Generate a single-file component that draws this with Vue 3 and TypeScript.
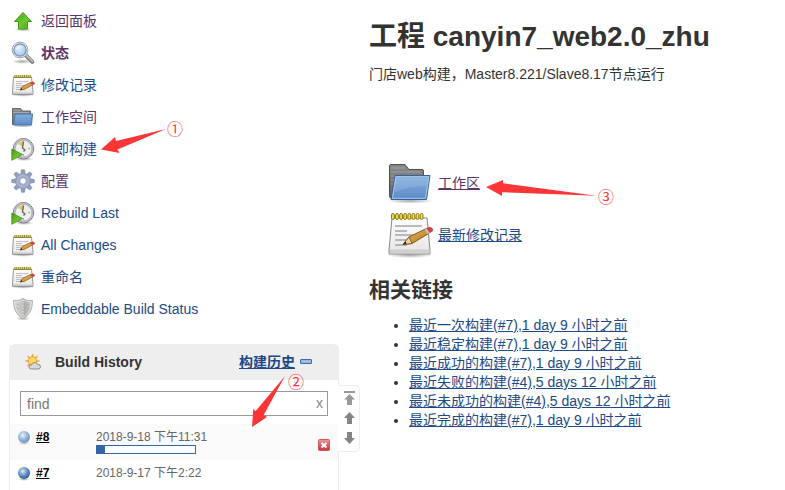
<script setup lang="ts">
interface Task {
  icon: string
  label: string
  visited?: boolean
  current?: boolean
}

interface RelatedBuild {
  name: string
  age: string
}

const tasks: Task[] = [
  { icon: 'up', label: '返回面板', visited: true },
  { icon: 'search', label: '状态', visited: true, current: true },
  { icon: 'notepad', label: '修改记录' },
  { icon: 'folder', label: '工作空间', visited: true },
  { icon: 'clock', label: '立即构建' },
  { icon: 'gear', label: '配置', visited: true },
  { icon: 'clock', label: 'Rebuild Last' },
  { icon: 'notepad', label: 'All Changes' },
  { icon: 'notepad', label: '重命名' },
  { icon: 'shield', label: 'Embeddable Build Status' },
]

const related: RelatedBuild[] = [
  { name: '最近一次构建(#7)', age: '1 day 9 小时之前' },
  { name: '最近稳定构建(#7)', age: '1 day 9 小时之前' },
  { name: '最近成功的构建(#7)', age: '1 day 9 小时之前' },
  { name: '最近失败的构建(#4)', age: '5 days 12 小时之前' },
  { name: '最近未成功的构建(#4)', age: '5 days 12 小时之前' },
  { name: '最近完成的构建(#7)', age: '1 day 9 小时之前' },
]

const progress = 8
const gearAngles = [0, 45, 90, 135, 180, 225, 270, 315]
const rings = [0, 1, 2, 3, 4, 5, 6, 7]
</script>

<template>
  <svg class="sprite" aria-hidden="true">
    <defs>
      <linearGradient id="gGreen" x1="0" y1="0" x2="1" y2="1">
        <stop offset="0" stop-color="#3f9a10" /><stop offset=".55" stop-color="#6cc72c" /><stop offset="1" stop-color="#3c9410" />
      </linearGradient>
      <linearGradient id="gBlue" x1="0" y1="0" x2="0" y2="1">
        <stop offset="0" stop-color="#86aede" /><stop offset="1" stop-color="#5b8cc8" />
      </linearGradient>
      <linearGradient id="gGray" x1="0" y1="0" x2="0" y2="1">
        <stop offset="0" stop-color="#8b8b8b" /><stop offset="1" stop-color="#626262" />
      </linearGradient>
      <linearGradient id="gPaper" x1="0" y1="0" x2="0" y2="1">
        <stop offset="0" stop-color="#ffffff" /><stop offset="1" stop-color="#e4e4e4" />
      </linearGradient>
      <linearGradient id="gPencil" x1="0" y1="0" x2="1" y2="1">
        <stop offset="0" stop-color="#f3c467" /><stop offset="1" stop-color="#a96f13" />
      </linearGradient>
      <linearGradient id="gShield" x1="0" y1="0" x2="1" y2="0">
        <stop offset="0" stop-color="#d4d6d3" /><stop offset=".5" stop-color="#c0c2be" /><stop offset=".55" stop-color="#a8aba7" /><stop offset="1" stop-color="#d0d2ce" />
      </linearGradient>
      <radialGradient id="gLens" cx=".4" cy=".35" r=".7">
        <stop offset="0" stop-color="#e4f0fb" /><stop offset="1" stop-color="#a3c4e8" />
      </radialGradient>
      <radialGradient id="gBall" cx=".4" cy=".35" r=".65">
        <stop offset="0" stop-color="#e6eee9" /><stop offset=".5" stop-color="#6f9bcd" /><stop offset="1" stop-color="#2c5c9c" />
      </radialGradient>
      <radialGradient id="gShadow">
        <stop offset="0" stop-color="#000" stop-opacity=".35" /><stop offset="1" stop-color="#000" stop-opacity="0" />
      </radialGradient>
      <linearGradient id="gRed" x1="0" y1="0" x2="0" y2="1">
        <stop offset="0" stop-color="#ee9a9a" /><stop offset="1" stop-color="#cc2f35" />
      </linearGradient>
    </defs>

    <symbol id="up" viewBox="0 0 24 24">
      <ellipse cx="12" cy="20.5" rx="9" ry="2" fill="url(#gShadow)" />
      <path d="M12 3.5 20.5 12.500H16.500V20H7.500V12.500H3.500Z" fill="url(#gGreen)" stroke="#3f9414" stroke-linejoin="round" />
      <path d="M12 5 18 11.500H15.500V19H8.500V11.500H6Z" fill="none" stroke="#8cdb57" stroke-width=".7" opacity=".5" />
    </symbol>

    <symbol id="search" viewBox="0 0 24 24">
      <ellipse cx="11" cy="20.500" rx="10" ry="2.500" fill="url(#gShadow)" />
      <path d="M15 14.500 21.300 20.800" stroke="#7c7c7c" stroke-width="4" stroke-linecap="round" />
      <path d="M15.500 14.500 21.500 20.300" stroke="#bcbcbc" stroke-width="1.800" stroke-linecap="round" />
      <circle cx="9" cy="9" r="7.900" fill="#f4f4f4" stroke="#a4a4a4" />
      <circle cx="9" cy="9" r="6.200" fill="url(#gLens)" stroke="#6f90bd" stroke-width="1.200" />
      <path d="M5 9C5.500 5.500 8.500 4.500 12 5.500 8.500 6 6.500 7 5 9Z" fill="#fff" opacity=".8" />
    </symbol>

    <symbol id="notepad" viewBox="0 0 48 48">
      <ellipse cx="24" cy="44" rx="23" ry="3" fill="url(#gShadow)" />
      <path d="M6 7H41L44 39V43H3V39Z" fill="url(#gPaper)" stroke="#888" stroke-linejoin="round" />
      <path d="M4 38.500H43.500V42.500H4Z" fill="#cfcfcf" />
      <path d="M9 15H36M9 20H21M9 24H34M9 29H27M9 34H21" stroke="#a5a5a5" stroke-width="1.400" />
      <g v-for="n in rings" :key="n">
        <rect :x="5.500 + n * 4.100" y="2.500" width="2.800" height="6" rx="1.400" fill="#f0dc5b" stroke="#8f7c10" />
      </g>
      <path d="M17 33.500 23 26 40.500 17.500 43.500 22 26 32.500Z" fill="url(#gPencil)" stroke="#845512" stroke-linejoin="round" />
      <path d="M17 33.500 23 26 26 32.500Z" fill="#ead3a5" stroke="#73511c" stroke-width=".8" />
      <path d="M17 33.500 19.500 30.500 20.500 32.700Z" fill="#222" />
      <path d="M38.500 18.500 41 17.300 44 21.500 41.500 23.200Z" fill="#b8bdc2" />
      <path d="M41 17.300 43.500 16.200Q47.500 17 46.500 20L44 21.500Z" fill="#de3c3c" stroke="#a42b2b" stroke-width=".6" />
    </symbol>

    <symbol id="notepadSmall" viewBox="0 0 24 24">
      <ellipse cx="12" cy="22" rx="11.500" ry="1.800" fill="url(#gShadow)" />
      <path d="M2.500 4H20.500L22 19V21.500H1.500V19Z" fill="url(#gPaper)" stroke="#969696" stroke-linejoin="round" />
      <path d="M2 19.500H21.500V21H2Z" fill="#c9c9c9" />
      <path d="M5 8.500H17M5 10.500H11M5 12.500H15M5 14.500H11M5 16.500H9" stroke="#b4b4b4" stroke-width=".8" />
      <path d="M3 3.500H20" stroke="#91822f" stroke-width="3" />
      <path d="M3.500 3H20" stroke="#ebd866" stroke-width="2" stroke-dasharray="1.200 .9" />
      <path d="M9 17 11.500 13.500 20 9.500 21.500 12 13 16.500Z" fill="#dfa24a" stroke="#8c5d1c" stroke-width=".8" stroke-linejoin="round" />
      <path d="M9 17 10.500 14.800 11.500 16.500Z" fill="#33261a" />
      <path d="M19.500 9.800 22 8.800Q24 9.500 23.300 11L21.500 12Z" fill="#dc4630" stroke="#a83b25" stroke-width=".5" />
    </symbol>

    <symbol id="folder" viewBox="0 0 48 48">
      <ellipse cx="24" cy="42" rx="23" ry="2.500" fill="url(#gShadow)" />
      <path d="M3.500 7Q3.500 5.500 5 5.500H19L23 10.500H36Q37.500 10.500 37.500 12V39H5Q3.500 39 3.500 37Z" fill="url(#gGray)" stroke="#505050" />
      <path d="M5 9H19M5 13H35M5 17H9M5 21H8M5 25H7" stroke="#a5a5a5" stroke-width=".8" />
      <path d="M9 16.500H44L40.500 40.500H5Z" fill="url(#gBlue)" stroke="#36639f" stroke-linejoin="round" />
      <path d="M10 17.700H42.700L39.500 39.300H6.500Z" fill="none" stroke="#a9c7e9" />
      <path d="M9 19H42L40.500 27Q22 27 8.500 33Z" fill="#fff" opacity=".12" />
    </symbol>

    <symbol id="folderSmall" viewBox="0 0 24 24">
      <ellipse cx="12" cy="21" rx="11" ry="1.500" fill="url(#gShadow)" />
      <path d="M1.500 3.500H9.500L11.500 6H19.500V19.500H1.500Z" fill="#858585" stroke="#666" stroke-linejoin="round" />
      <path d="M2 5H9M2 7.500H18" stroke="#a9a9a9" />
      <path d="M4 9H21.500L20.500 20H2.500Z" fill="url(#gBlue)" stroke="#4673ad" stroke-linejoin="round" />
    </symbol>

    <symbol id="clock" viewBox="0 0 24 24">
      <ellipse cx="13" cy="22" rx="10" ry="2" fill="url(#gShadow)" />
      <circle cx="12.500" cy="11.700" r="10.200" fill="#eeeeea" stroke="#74747d" />
      <circle cx="12.500" cy="11.700" r="8.800" fill="none" stroke="#b4b5c6" stroke-width="1.900" />
      <path d="M12 10.500 7 6.500Q9 4 12.500 4Z" fill="#e1c75b" />
      <path d="M12.500 4.500 11.500 11 14 13 12.500 14.500" fill="none" stroke="#65645d" stroke-width="1.300" />
      <circle cx="18" cy="11.500" r=".7" fill="#777" /><circle cx="12.500" cy="18" r=".7" fill="#777" />
      <path d="M.8 12 11.500 17.500 .8 23.300Z" fill="url(#gGreen)" stroke="#468f20" stroke-width=".8" />
    </symbol>

    <symbol id="gear" viewBox="0 0 24 24">
      <g fill="#929fc0" stroke="#7886aa" stroke-width=".7">
        <path v-for="angle in gearAngles" :key="angle" d="M9.800 6 10.500 .8H13.500L14.200 6Z" :transform="`rotate(${angle} 12 12)`" />
      </g>
      <circle cx="12" cy="12" r="5.700" fill="none" stroke="#8e9abb" stroke-width="4.600" />
      <circle cx="12" cy="12" r="5.500" fill="none" stroke="#a9b4d0" stroke-width="2.500" />
      <circle cx="12" cy="12" r="3.300" fill="#fff" stroke="#7e8aad" stroke-width=".8" />
    </symbol>

    <symbol id="shield" viewBox="0 0 24 24">
      <ellipse cx="12" cy="21.500" rx="7" ry="2" fill="url(#gShadow)" />
      <path d="M12 1.500Q15 4 21.500 3.500 22 16 12 22 2 16 2.500 3.500 9 4 12 1.500Z" fill="url(#gShield)" stroke="#b2b4b1" />
      <path d="M12 3Q15 5 20.300 4.800 20.300 15 12 20.500 3.700 15 3.700 4.800 9 5 12 3Z" fill="none" stroke="#e6e7e4" stroke-width=".8" />
      <path d="M12 5V19" stroke="#eee" stroke-dasharray="1 2" />
      <path d="M7 7V15M17 7V15" stroke="#999c98" stroke-dasharray="1 3" />
    </symbol>

    <symbol id="weather" viewBox="0 0 16 16">
      <path d="M7.500 0V14M.5 7H14.500M2.500 2 12.500 12M12.500 2 2.500 12" stroke="#f0a53a" stroke-width="1.400" />
      <circle cx="7.500" cy="7" r="4.300" fill="#fbd763" stroke="#eda02d" />
      <path d="M6.500 15Q4 15 4 12.800 4.200 10.800 6.500 11 7 8.500 9.800 8.500 12 8.500 12.500 10.300 15.500 10.300 15.500 12.800 15.500 15 13 15Z" fill="#d9dad8" stroke="#888a87" />
    </symbol>

    <symbol id="ball" viewBox="0 0 16 16">
      <ellipse cx="8" cy="14.300" rx="6" ry="1.600" fill="url(#gShadow)" />
      <circle cx="8" cy="8" r="6" fill="url(#gBall)" />
    </symbol>

    <symbol id="stop" viewBox="0 0 12 12">
      <rect x=".5" y=".5" width="11" height="11" rx="1" fill="url(#gRed)" stroke="#c95a5f" />
      <path d="M3.500 4 8.500 8.500M8.500 4 3.500 8.500" stroke="#fff" stroke-width="2" />
    </symbol>

    <symbol id="pageTop" viewBox="0 0 12 14">
      <path d="M1 0H12V2H1ZM6.500 3 12 8.500H9V14H4V8.500H1Z" fill="#999" />
    </symbol>
    <symbol id="pageUp" viewBox="0 0 12 14">
      <path d="M6.500 1 12 7H9V13H4V7H1Z" fill="#858585" />
    </symbol>
    <symbol id="pageDown" viewBox="0 0 12 14">
      <path d="M6.500 13 12 7H9V1H4V7H1Z" fill="#858585" />
    </symbol>
  </svg>

  <div class="page">
    <aside class="side">
      <nav class="tasks">
        <a
          v-for="task in tasks"
          :key="task.label"
          href="#"
          class="task"
          :class="{ visited: task.visited, current: task.current }"
        >
          <svg class="icon24" aria-hidden="true">
            <use :href="task.icon === 'notepad' || task.icon === 'folder' ? `#${task.icon}Small` : `#${task.icon}`" />
          </svg>
          <span>{{ task.label }}</span>
        </a>
      </nav>

      <section class="history">
        <header class="history-head">
          <svg class="icon16" aria-hidden="true"><use href="#weather" /></svg>
          <span class="history-title">Build History</span>
          <a href="#" class="trend">构建历史</a>
          <button class="collapse" type="button" aria-label="collapse"></button>
        </header>
        <div class="search">
          <input class="find" type="text" placeholder="find" aria-label="find" />
          <button class="clear" type="button">x</button>
        </div>
        <div class="build running">
          <svg class="icon16" aria-hidden="true"><use href="#ball" /></svg>
          <a href="#" class="number">#8</a>
          <div class="details">
            <span>2018-9-18 下午11:31</span>
            <div class="progress"><div class="done" :style="{ width: progress + '%' }"></div></div>
          </div>
          <button class="stop" type="button" aria-label="stop">
            <svg class="icon12" aria-hidden="true"><use href="#stop" /></svg>
          </button>
        </div>
        <div class="build">
          <svg class="icon16" aria-hidden="true"><use href="#ball" /></svg>
          <a href="#" class="number">#7</a>
          <div class="details"><span>2018-9-17 下午2:22</span></div>
        </div>
        <div class="pager">
          <button type="button" aria-label="newest"><svg aria-hidden="true"><use href="#pageTop" /></svg></button>
          <button type="button" aria-label="newer"><svg aria-hidden="true"><use href="#pageUp" /></svg></button>
          <button type="button" aria-label="older"><svg aria-hidden="true"><use href="#pageDown" /></svg></button>
        </div>
      </section>
    </aside>

    <main class="main">
      <h1>工程 canyin7_web2.0_zhu</h1>
      <p class="description">门店web构建，Master8.221/Slave8.17节点运行</p>
      <div class="shortcuts">
        <div class="shortcut">
          <svg class="icon48" aria-hidden="true"><use href="#folder" /></svg>
          <a href="#" class="visited">工作区</a>
        </div>
        <div class="shortcut">
          <svg class="icon48" aria-hidden="true"><use href="#notepad" /></svg>
          <a href="#">最新修改记录</a>
        </div>
      </div>
      <h2>相关链接</h2>
      <ul class="related">
        <li v-for="build in related" :key="build.name">
          <a href="#">{{ build.name }},{{ build.age }}</a>
        </li>
      </ul>
    </main>

    <div class="note first">
      <svg width="66" height="26" viewBox="0 0 66 26" aria-hidden="true"><path d="M65 1 15 13 14 9 0 21.500 18.500 25 16.500 21.500Z" /></svg>
      <span>①</span>
    </div>
    <div class="note second">
      <svg width="34" height="52" viewBox="0 0 34 52" aria-hidden="true"><path d="M33 0 3.700 35 1.300 33 0 51 15 41 11.700 39Z" /></svg>
      <span>②</span>
    </div>
    <div class="note third">
      <svg width="111" height="18" viewBox="0 0 111 18" aria-hidden="true"><path d="M110.500 16.700 17 4.300V1L0 8 16 17V13.300Z" /></svg>
      <span>③</span>
    </div>
  </div>
</template>

<style>
body {
  margin: 0;
  background: #fff;
}
</style>

<style scoped>
.sprite {
  position: absolute;
  width: 0;
  height: 0;
}
.page {
  position: relative;
  display: flex;
  min-height: 100vh;
  box-sizing: border-box;
  font: 14px/20px "Liberation Sans", "Noto Sans CJK SC", sans-serif;
  color: #333;
}
a {
  color: #204a87;
}
a.visited {
  color: #5c3566;
}
button {
  border: 0;
  padding: 0;
  background: none;
}
svg {
  display: block;
  flex: none;
}
.icon12 { width: 12px; height: 12px; }
.icon16 { width: 16px; height: 16px; }
.icon24 { width: 24px; height: 24px; }
.icon48 { width: 48px; height: 48px; }

.side {
  flex: 0 0 330px;
  display: flex;
  flex-direction: column;
  padding: 5px 0 0 9px;
}
.task {
  display: flex;
  align-items: center;
  gap: 6px;
  height: 32px;
  padding-left: 2px;
  text-decoration: none;
}
.task.current {
  font-weight: bold;
}
.history {
  position: relative;
  flex: 1;
  margin-top: 19px;
  box-sizing: border-box;
  border: 1px solid #eee;
  border-bottom: 0;
  border-radius: 6px 6px 0 0;
}
.history-head {
  display: flex;
  align-items: center;
  height: 33px;
  padding: 0 26px 2px 15px;
  background: #eee;
  font-weight: bold;
}
.history-title {
  margin-left: 14px;
}
.trend {
  margin-left: auto;
}
.collapse {
  width: 12px;
  height: 5px;
  margin-left: 5px;
  border: 1px solid #3b6ba5;
  border-radius: 1px;
  background: #9dbce0;
}
.search {
  position: relative;
  padding: 11px 10px 8px;
}
.find {
  display: block;
  width: 100%;
  height: 25px;
  box-sizing: border-box;
  border: 1px solid #999;
  padding: 0 24px 0 6px;
  background: #fff;
  font: inherit;
}
.find::placeholder {
  color: #777;
}
.clear {
  position: absolute;
  top: 13px;
  right: 15px;
  font: inherit;
  color: #888;
}
.build {
  display: flex;
  padding: 5px 8px 0 6px;
  font-size: 12px;
  line-height: 16px;
  color: #666;
}
.build.running {
  height: 31px;
  background: #fafafa;
}
.running .icon16 {
  opacity: .65;
}
.number {
  width: 60px;
  margin-left: 4px;
  font-weight: bold;
  color: #000;
}
.details {
  flex: 1;
}
.progress {
  width: 100px;
  height: 9px;
  box-sizing: border-box;
  border: 1px solid #3465a4;
  background: #fff;
}
.done {
  height: 100%;
  background: #3465a4;
}
.stop {
  align-self: center;
}
.pager {
  position: absolute;
  top: 40px;
  left: 100%;
  display: flex;
  flex-direction: column;
  gap: 6px;
  padding: 5px 4px 6px;
  border: 1px solid #eee;
  border-left-color: #fff;
  border-radius: 0 5px 5px 0;
  background: #fff;
}
.pager svg {
  width: 12px;
  height: 14px;
}

.main {
  flex: 1;
  min-width: 0;
  padding: 17px 20px 0 30px;
}
h1 {
  margin: 0;
  font-size: 28px;
  line-height: 40px;
}
.description {
  margin: 7px 0 75px;
}
.shortcuts {
  display: flex;
  flex-direction: column;
  gap: 4px;
  padding-left: 17px;
}
.shortcut {
  display: flex;
  align-items: center;
  gap: 4px;
}
h2 {
  margin: 16px 0 11px;
  font-size: 21px;
  line-height: 30px;
}
.related {
  margin: 0;
  padding-left: 40px;
  line-height: 19px;
}

.note {
  position: absolute;
  color: #f33;
}
.note path {
  fill: #fc3636;
}
.note span {
  position: absolute;
  font: 16px/16px "Noto Sans CJK SC", sans-serif;
}
.first { left: 101px; top: 128px; }
.first span { left: 66px; top: -8px; }
.second { left: 252px; top: 376px; }
.second span { left: 36px; top: -3px; }
.third { left: 486px; top: 179px; }
.third span { left: 112px; top: 9px; }
</style>
